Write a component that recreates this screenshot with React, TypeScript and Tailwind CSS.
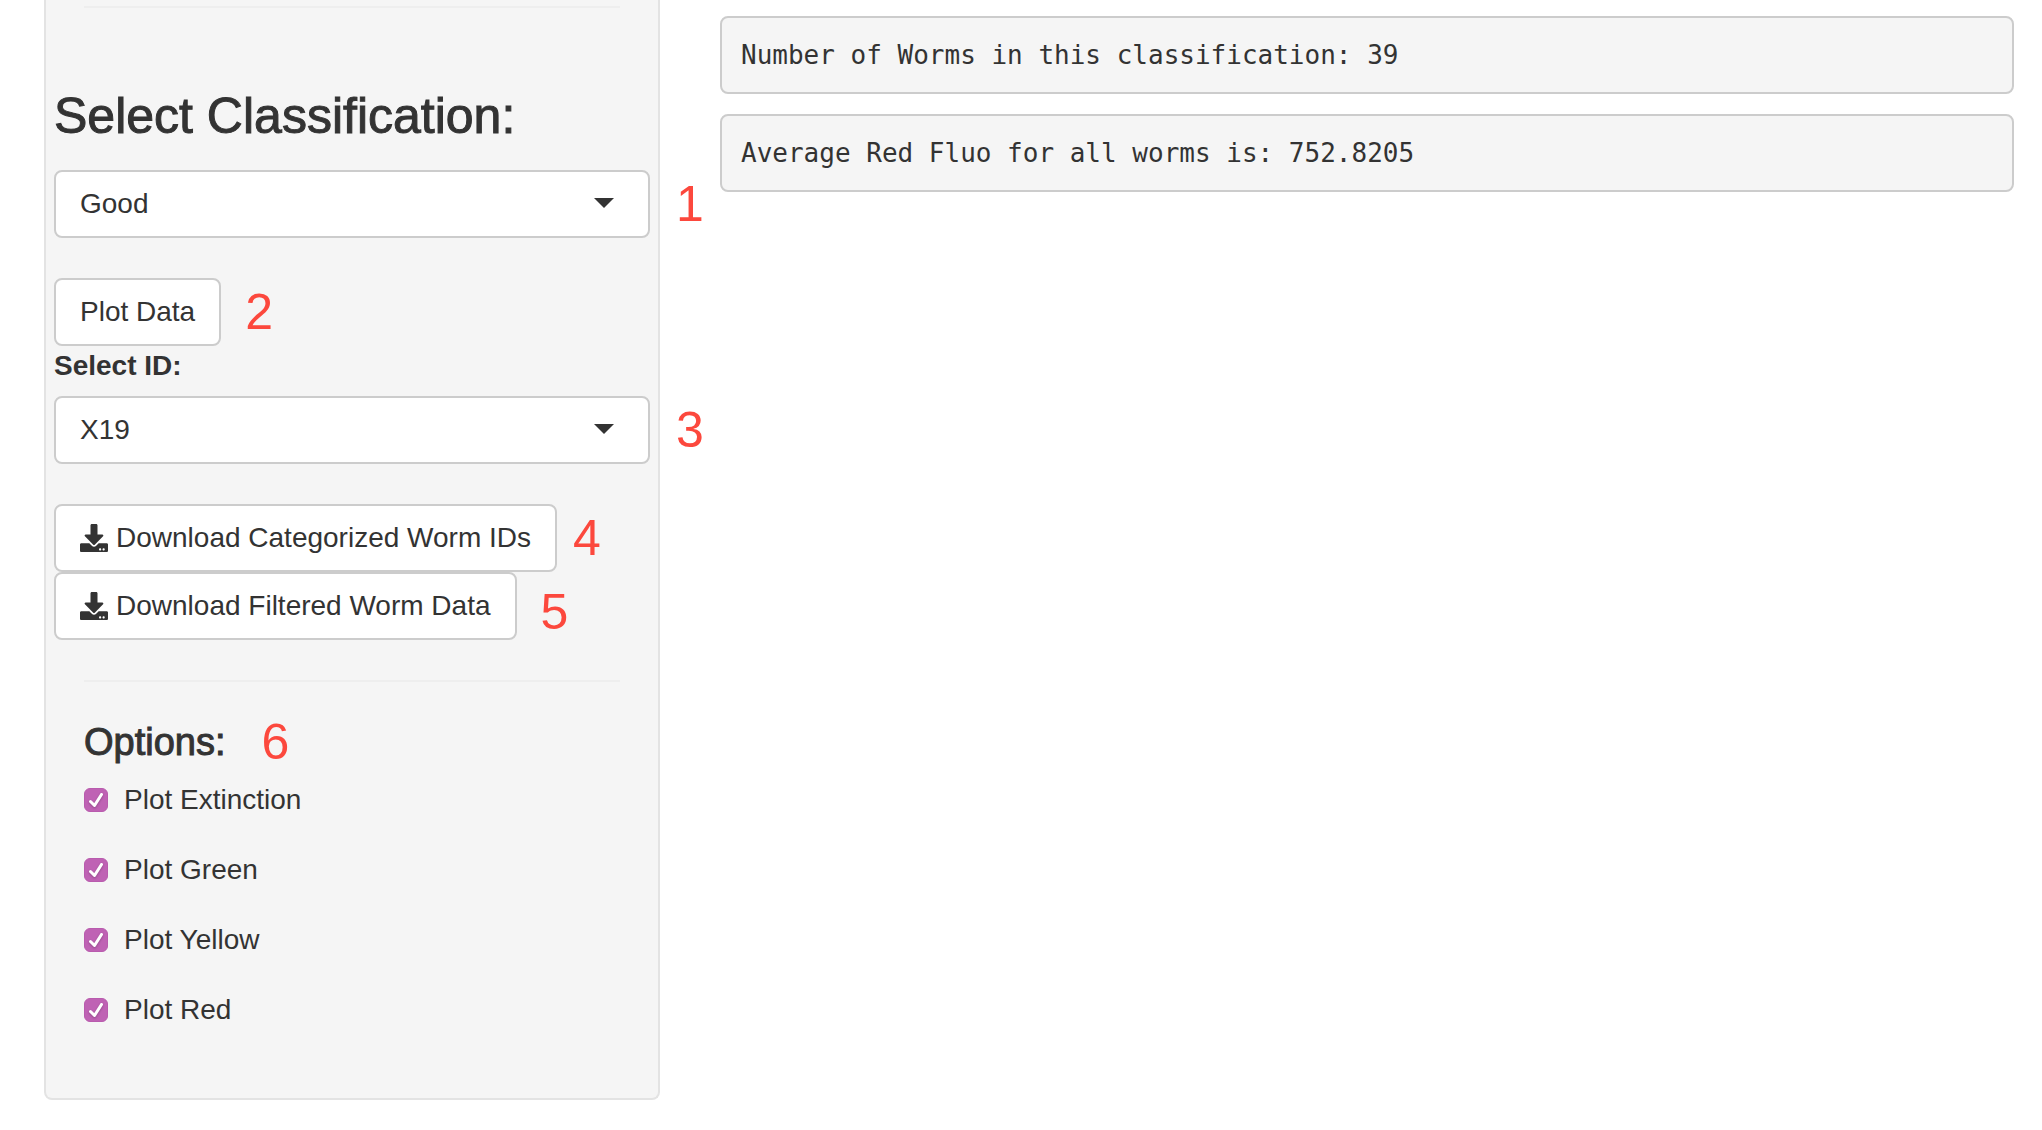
import { useId, useState } from "react";
import type { ReactNode } from "react";
import { FaDownload } from "react-icons/fa";

const markerClass = "text-[50px] leading-[56px] font-normal text-[#fc483d]";

function Marker({ n }: { n: number }) {
  return <span className={markerClass}>{n}</span>;
}

function SideMarker({ n }: { n: number }) {
  return (
    <span className={`absolute top-1.5 left-full ml-[26px] ${markerClass}`}>{n}</span>
  );
}

function Dropdown({
  id,
  label,
  options,
  marker,
}: {
  id: string;
  label?: string;
  options: string[];
  marker: number;
}) {
  return (
    <div className="relative">
      <select
        id={id}
        aria-label={label}
        className="block h-[68px] w-full appearance-none rounded-lg border-2 border-[#cccccc] bg-white px-6 text-[28px] leading-[40px] text-[#333333]"
      >
        {options.map((o) => (
          <option key={o}>{o}</option>
        ))}
      </select>
      <svg
        viewBox="0 0 20 10"
        className="pointer-events-none absolute top-7 right-9 h-[10px] w-5 fill-[#333333]"
        aria-hidden="true"
      >
        <path d="M0 0h20L10 10z" />
      </svg>
      <SideMarker n={marker} />
    </div>
  );
}

function Button({ children }: { children: ReactNode }) {
  return (
    <button
      type="button"
      className="flex h-[68px] items-center gap-2 rounded-lg border-2 border-[#cccccc] bg-white px-6 whitespace-nowrap"
    >
      {children}
    </button>
  );
}

function Option({ label }: { label: string }) {
  const id = useId();
  const [on, setOn] = useState(true);
  return (
    <div className="flex h-10 items-center gap-4">
      <span className="grid size-6">
        <input
          id={id}
          type="checkbox"
          checked={on}
          onChange={() => setOn(!on)}
          className="peer col-start-1 row-start-1 size-6 appearance-none rounded-md border border-[#b3b3b3] bg-white checked:border-[#b95bae] checked:bg-[#bf62b4]"
        />
        <svg
          viewBox="0 0 24 24"
          className="pointer-events-none col-start-1 row-start-1 size-6 fill-none stroke-white stroke-3 opacity-0 drop-shadow-[0_1px_1px_rgba(0,0,0,0.25)] peer-checked:opacity-100"
          aria-hidden="true"
        >
          <path d="M6.500 13.500l4 4L17.500 6.500" strokeLinecap="round" strokeLinejoin="round" />
        </svg>
      </span>
      <label htmlFor={id}>{label}</label>
    </div>
  );
}

function Output({ children }: { children: ReactNode }) {
  return (
    <pre className="rounded-lg border-2 border-[#cccccc] bg-[#f5f5f5] px-[19px] py-[17px] font-['DejaVu_Sans_Mono',monospace] text-[26px] leading-[40px]">
      {children}
    </pre>
  );
}

export default function App() {
  return (
    <div className="grid grid-cols-[308fr_647fr] items-start gap-15 bg-white pr-7 pl-11 font-['Liberation_Sans',Arial,sans-serif] text-[28px] leading-[40px] text-[#333333]">
      <aside className="rounded-b-lg border-2 border-t-0 border-[#e3e3e3] bg-[#f5f5f5] px-2 pt-1.5 pb-[68px]">
        <hr className="mx-[30px] border-t-2 border-[#eeeeee]" />
        <h2 className="mt-[80px] text-[50px] leading-[56px] font-medium [-webkit-text-stroke:1px]">
          Select Classification:
        </h2>
        <div className="mt-[26px]">
          <Dropdown
            id="classification"
            label="Select Classification"
            options={["Good", "Bad"]}
            marker={1}
          />
        </div>
        <div className="mt-10 flex items-center gap-6">
          <Button>Plot Data</Button>
          <Marker n={2} />
        </div>
        <label htmlFor="worm-id" className="mb-2.5 block font-bold">
          Select ID:
        </label>
        <Dropdown id="worm-id" options={["X19", "X20"]} marker={3} />
        <div className="mt-10 flex items-center gap-4">
          <Button>
            <FaDownload className="size-7" />
            Download Categorized Worm IDs
          </Button>
          <Marker n={4} />
        </div>
        <div className="flex items-end gap-6">
          <Button>
            <FaDownload className="size-7" />
            Download Filtered Worm Data
          </Button>
          <Marker n={5} />
        </div>
        <hr className="mx-[30px] mt-10 border-t-2 border-[#eeeeee]" />
        <section className="mt-8 pl-[30px]">
          <div className="flex items-center gap-9">
            <h4 className="text-[38px] leading-[56px] font-medium [-webkit-text-stroke:1px]">
              Options:
            </h4>
            <Marker n={6} />
          </div>
          <div className="mt-2.5 flex flex-col gap-[30px]">
            <Option label="Plot Extinction" />
            <Option label="Plot Green" />
            <Option label="Plot Yellow" />
            <Option label="Plot Red" />
          </div>
        </section>
      </aside>
      <main className="flex flex-col gap-5 pt-4">
        <Output>Number of Worms in this classification: 39</Output>
        <Output>Average Red Fluo for all worms is: 752.8205</Output>
      </main>
    </div>
  );
}
